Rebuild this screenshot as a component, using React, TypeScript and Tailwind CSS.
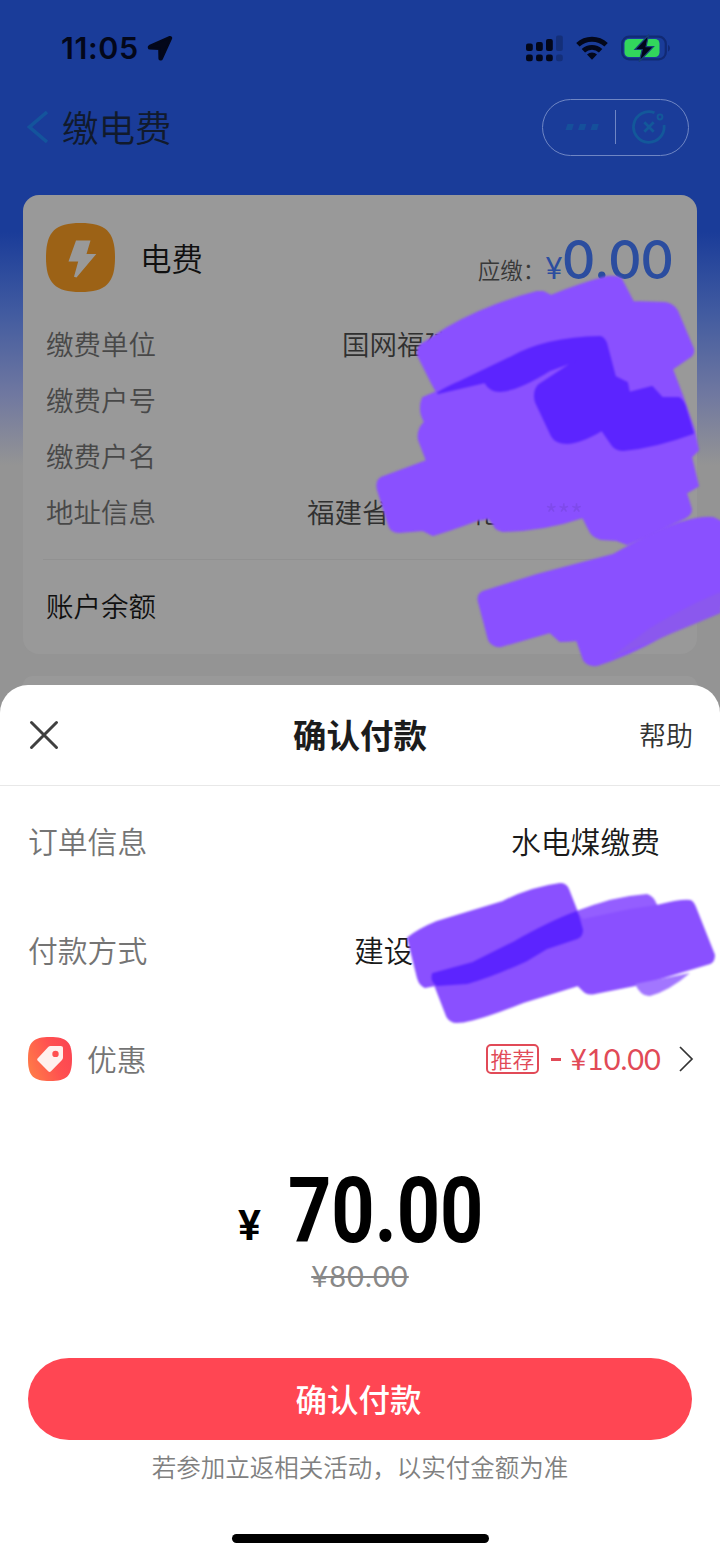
import type { ReactNode } from 'react';

const billRows = [
  { label: '缴费单位', value: '国网福建', tail: '', offset: 'pl-[342px]' },
  { label: '缴费户号', value: '', tail: '', offset: '' },
  { label: '缴费户名', value: '', tail: '', offset: '' },
  { label: '地址信息', value: '福建省', tail: '花', offset: 'pl-[307px]' },
];

function StatusBar() {
  return (
    <div className="flex h-[96px] items-center pl-[61px] pr-[49px] text-[#03071a]">
      <span className="w-[77px] font-[Inter] text-[30.500px] font-semibold tracking-[0.600px]">11:05</span>
      <svg className="ml-[9px]" width="26" height="26" viewBox="0 0 26 26" fill="currentColor">
        <path
          d="M22.800 2.200 2.500 11.200c-.9.500-.7 2.200.3 2.200l9.600.3.200 9.700c0 1 1.700 1.300 2.100.4L24 3.200c.2-.7-.5-1.300-1.200-1Z"
          stroke="currentColor"
          strokeWidth="2.400"
          strokeLinejoin="round"
        />
      </svg>
      <div className="ml-auto flex items-center">
        {/* Dual SIM signal */}
        <svg width="37" height="27" viewBox="0 0 37 27" fill="currentColor">
          <rect x="0" y="8.500" width="6.800" height="7.500" rx="2" />
          <rect x="10" y="7" width="6.800" height="9" rx="2" />
          <rect x="20" y="4" width="6.800" height="12" rx="2" />
          <rect x="30" y="0.500" width="6.800" height="15.500" rx="2" opacity="0.250" />
          <rect x="0" y="19.500" width="6.800" height="6.800" rx="2.200" />
          <rect x="10" y="19.500" width="6.800" height="6.800" rx="2.200" />
          <rect x="20" y="19.500" width="6.800" height="6.800" rx="2.200" />
          <rect x="30" y="19.500" width="6.800" height="6.800" rx="2.200" opacity="0.250" />
        </svg>
        <svg className="ml-[13px]" width="32" height="24" viewBox="0 0 32 24" fill="none" stroke="currentColor" strokeWidth="4.900">
          <path d="M1.900 8.800a20.500 20.500 0 0 1 28.200 0" />
          <path d="M7.400 14.800a12.500 12.500 0 0 1 17.200 0" />
          <path d="M16 23.800l-5-5.200a7.200 7.200 0 0 1 10 0Z" fill="currentColor" stroke="none" />
        </svg>
        <svg className="ml-[13px]" width="50" height="28" viewBox="0 0 50 28">
          <rect x="1.200" y="2.700" width="43.600" height="22.600" rx="7" fill="none" stroke="#112a74" strokeWidth="2.200" />
          <rect x="3.500" y="5" width="35" height="18" rx="4.500" fill="#32d65c" />
          <path d="M47 11v6.500c2.600-.8 2.600-5.700 0-6.500Z" fill="#112a74" />
          <path d="M27.500 1 14 15.500h7.200L18.300 27.500 32.500 12.600h-7.400Z" fill="#02051a" stroke="#173f78" strokeWidth="1.200" />
        </svg>
      </div>
    </div>
  );
}

function NavBar() {
  return (
    <div className="flex h-[62px] items-center pl-[26px] pr-[31px]">
      <svg width="24" height="34" viewBox="0 0 24 34" fill="none" stroke="#14549c" strokeWidth="3.600">
        <path d="M21 2 3.500 17 21 32" />
      </svg>
      <h1 className="ml-[12px] text-[36.500px] font-[350] text-[#111a2c]">缴电费</h1>
      <div className="ml-auto flex h-[57px] w-[147px] items-center rounded-full border border-[#6f86c4]">
        <svg className="ml-[20px]" width="38" height="10" viewBox="0 0 38 10" fill="#15509b">
          <path d="M4.500 2h6.300L9 8H2.500ZM17 2h6.300l-1.800 6H15ZM29.500 2h6.300L34 8h-6.500Z" />
        </svg>
        <div className="ml-[14px] h-[34px] w-px bg-[#6f86c4]" />
        <svg className="ml-[15px]" width="36" height="36" viewBox="0 0 36 36" fill="none" stroke="#13589a" strokeWidth="2.800">
          <path d="M23.500 3.800A15.300 15.300 0 1 0 33 16" />
          <circle cx="29" cy="8" r="2.400" strokeWidth="2" />
          <path d="m13.300 13.300 9.400 9.400m0-9.400-9.400 9.400" />
        </svg>
      </div>
    </div>
  );
}

function BillCard() {
  return (
    <section className="mx-[23px] mt-[37px] h-[459px] rounded-[16px] bg-[#999999] px-[23px] pt-[28px]">
      <div className="flex h-[69px] items-center">
        <svg width="69" height="69" viewBox="0 0 69 69">
          <path d="M34.500 0C60 0 69 9 69 34.500S60 69 34.500 69 0 60 0 34.500 9 0 34.500 0Z" fill="#9c6216" />
          <path d="M30 17.500h14.500L40.500 31h9.800L30.500 54.500l-2.500-.8 4.200-15.200H22.500Z" fill="#999999" />
        </svg>
        <span className="ml-[25px] text-[31.500px] font-[350] text-[#101010]">电费</span>
        <div className="ml-auto flex items-baseline pt-[3px]">
          <span className="text-[22.500px] font-[350] text-[#383838]">应缴：</span>
          <span className="w-[18px] font-[Lato] text-[30px] leading-none text-[#2b4d9f]">¥</span>
          <span className="font-[Lato] text-[53px] leading-none font-semibold tracking-[1.500px] text-[#2b4d9f]">0.00</span>
        </div>
      </div>
      <div className="mt-[24px] -mr-[23px]">
        {billRows.map((row) => (
          <div key={row.label} className="grid h-[56px] items-center text-[27.500px] font-[350]">
            <span className="col-start-1 row-start-1 text-[#484848]">{row.label}</span>
            <span className={`col-start-1 row-start-1 -ml-[46px] text-[#303030] ${row.offset}`}>
              {row.value}
              <span className="pl-[82px]">{row.tail}</span>
            </span>
          </div>
        ))}
      </div>
      <div className="-ml-[3px] mt-[19px] h-px bg-[#919191]" />
      <div className="flex h-[92px] items-center text-[27.500px] font-[350] text-[#101010]">账户余额</div>
    </section>
  );
}

function SheetRow({ label, icon, children }: { label: string; icon?: ReactNode; children: ReactNode }) {
  return (
    <div className="flex h-[109px] items-center pl-[28px] text-[29.800px] font-[350]">
      {icon}
      <span className="text-[#747474]">{label}</span>
      {children}
    </div>
  );
}

function TagIcon() {
  return (
    <svg className="mr-[15px]" width="44" height="44" viewBox="0 0 44 44">
      <defs>
        <linearGradient id="tag" x1="0" y1="0.700" x2="1" y2="0.300">
          <stop offset="0" stopColor="#ff7a48" />
          <stop offset="0.600" stopColor="#ff5050" />
          <stop offset="1" stopColor="#fb4653" />
        </linearGradient>
      </defs>
      <path d="M22 0c17 0 22 5 22 22s-5 22-22 22S0 39 0 22 5 0 22 0Z" fill="url(#tag)" />
      <path
        fillRule="evenodd"
        d="M22.500 9h10.200c1.500 0 2.300.9 2.300 2.300v9.200c0 1-.3 1.700-1 2.400L23 34.200c-.9.900-1.900.9-2.800 0L9.800 23.800c-.8-.8-.8-1.700 0-2.500L20.200 10c.7-.7 1.400-1 2.300-1Zm5 4.700a3.200 3.200 0 1 0 0 6.400 3.200 3.200 0 0 0 0-6.400Z"
        fill="#fff0ee"
      />
    </svg>
  );
}

function PaymentSheet() {
  return (
    <section className="mt-[9px] flex h-[873px] flex-col rounded-t-[28px] bg-white">
      <header className="grid h-[101px] grid-cols-3 items-center border-b-[1.500px] border-[#e8e8e8] pl-[29px] pr-[27px]">
        <svg width="30" height="30" viewBox="0 0 30 30" stroke="#404040" strokeWidth="3" strokeLinecap="round">
          <path d="M2.500 2.500l25 25m0-25-25 25" />
        </svg>
        <h2 className="-ml-[2px] pb-px text-center text-[33.500px] font-semibold text-[#1c1c1c]">确认付款</h2>
        <span className="text-right text-[27px] font-[350] text-[#333333]">帮助</span>
      </header>

      <SheetRow label="订单信息">
        <span className="ml-auto mr-[60px] text-[#1a1a1a]">水电煤缴费</span>
      </SheetRow>
      <SheetRow label="付款方式">
        <span className="ml-[207px] text-[29.500px] text-[#1a1a1a]">建设银</span>
      </SheetRow>
      <SheetRow label="优惠" icon={<TagIcon />}>
        <div className="ml-auto flex items-center pr-[26px] text-[#e14a57]">
          <span className="flex h-[30px] w-[53px] items-center justify-center rounded-[5px] border-2 border-[#e14a57] text-[22px]">
            推荐
          </span>
          <span className="ml-[12px] mt-[2px] h-[2.500px] w-[10px] bg-[#e14a57]" />
          <span className="ml-[9px] w-[90px] pt-px font-[Lato] text-[29px] font-normal">¥10.00</span>
          <svg className="ml-[18px]" width="16" height="28" viewBox="0 0 16 28" fill="none" stroke="#333333" strokeWidth="1.700">
            <path d="m2 2 12 12L2 26" />
          </svg>
        </div>
      </SheetRow>

      {/* Amount */}
      <div className="mt-[45px] flex h-[104px] items-center pl-[238px] font-[Roboto] leading-none text-black">
        <span className="w-[50px] pt-[31px] text-[43px] font-semibold">¥</span>
        <span className="origin-left scale-x-[0.840] pt-[4px] text-[90px] leading-[80px] font-bold">70.00</span>
      </div>
      <div className="flex h-[28px] items-center justify-center font-[Lato] text-[29px] leading-[28px] tracking-[1.100px] text-[#888888] line-through">
        ¥80.00
      </div>

      <button className="mx-[28px] mt-[68px] flex h-[82px] shrink-0 items-center justify-center rounded-full bg-[#ff4653] pr-[3px] text-[31.500px] font-medium text-white">
        确认付款
      </button>
      <p className="mt-[9px] text-center text-[24.500px] leading-[36px] font-[350] text-[#808080]">
        若参加立返相关活动，以实付金额为准
      </p>
      <div className="mx-auto mt-auto mb-[15px] h-[9px] w-[257px] rounded-full bg-black" />
    </section>
  );
}

// Marker strokes that hide the private fields
function MarkerStrokes() {
  return (
    <svg className="pointer-events-none absolute inset-0" width="720" height="1558" viewBox="0 0 720 1558">
      <g strokeLinejoin="round" strokeWidth="2" className="blur-[1px]">
        <g fill="#8a50ff" stroke="#8a50ff">
          <path d="M424 343 447 328Q487 305 537 292L543 292 551 296Q580 284 607 277 617 276 621 279L633 302 665 303Q673 304 677 311L693 349Q694 353 691 356L672 369 683 398 694 430 698 450 691 457 698 486 686 493 691 509Q691 514 686 517L643 537 627 544 617 540 601 539Q592 537 589 529L583 517Q545 530 503 531 496 530 494 525L489 518 477 520Q450 530 433 535L423 530 399 532Q391 532 389 525L378 490Q376 481 381 478L427 461 419 440Q417 430 425 422 418 410 423 398L437 392 432 383 418 355Q417 346 424 343Z" />
          <path d="M479 602Q477 595 483 592L537 575 613 555Q650 534 680 523 700 517 713 518L721 522V606L663 636Q627 656 597 665 588 666 584 660L577 640Q568 641 560 641L550 632 501 646Q493 647 489 640Z" />
          <path d="M408 938Q420 929 437 922L503 902Q530 888 560 884 566 884 568 889L577 912Q612 898 647 896L657 906Q680 900 690 901 693 902 695 907L714 955Q714 961 710 963L640 984 595 993Q587 995 583 990L578 985 523 1002Q473 1022 457 1022 450 1022 447 1016L435 985 425 987Q420 985 418 978Z" />
        </g>
        <g fill="#5c24ff" stroke="#5c24ff">
          <path d="M438 393Q450 386 460 382L510 358Q545 338 600 337 604 338 606 343L615 377 627 383 629 393 652 387 662 398 679 398Q684 401 686 410L693 433Q655 447 623 450 615 450 611 443L602 430Q580 443 567 443 556 443 552 436L536 402Q533 392 539 385L577 360 550 370Q518 390 500 391 490 391 485 382Z" />
          <path d="M433 974 473 963 513 943Q550 922 577 912L582 930Q582 936 577 938L547 948 527 960Q490 977 467 983L437 985Q431 981 433 974Z" />
        </g>
        <path d="M721 592Q690 604 650 628L610 658 663 637 721 613Z" fill="#8b58ee" />
        <path d="M577 912Q612 896 647 894 654 896 657 905L630 909 583 919Z" fill="#945eff" />
        <path d="M635 984 690 973Q669 991 650 996 641 997 635 984Z" fill="#a276ff" />
      </g>
      {/* Leftovers showing through the marker */}
      <text x="545" y="525" fontSize="27" fontFamily="'Noto Sans CJK SC', sans-serif" fill="#5535a0" opacity="0.200">***</text>
    </svg>
  );
}

export default function App() {
  return (
    <main className="relative h-[1558px] w-[720px] overflow-hidden bg-[#949494] bg-[linear-gradient(to_bottom,#1a3c99_0px,#1a3c99_232px,#405aa0_310px,#7078a0_395px,#949494_465px)] font-['Noto_Sans_CJK_SC',sans-serif] whitespace-nowrap">
      <StatusBar />
      <NavBar />
      <BillCard />
      <div className="mx-[23px] mt-[22px] -mb-[9px] h-[9px] rounded-t-[16px] bg-[#999999]" />
      <PaymentSheet />
      <MarkerStrokes />
    </main>
  );
}
